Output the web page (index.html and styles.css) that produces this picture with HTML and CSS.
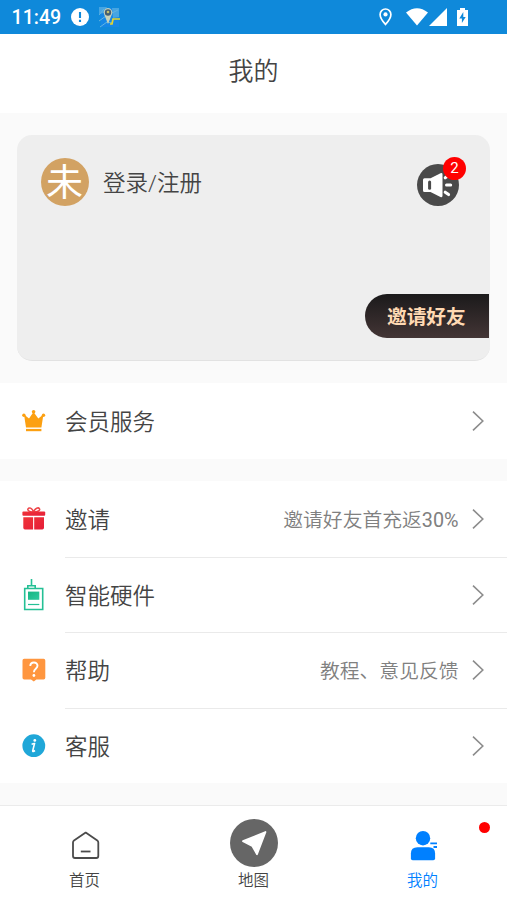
FILE: index.html
```html
<!DOCTYPE html>
<html lang="zh-CN">
<head>
<meta charset="utf-8">
<meta name="viewport" content="width=device-width, initial-scale=1">
<title>我的</title>
<link rel="stylesheet" href="styles.css">
</head>
<body>
<div class="app">
  <div class="status">
    <span class="time">11:49</span>
    <svg class="alert" width="18" height="18" viewBox="0 0 18 18"><circle cx="9" cy="9" r="9" fill="#fff"/><path d="M9 4v6M9 11.700v2.200" stroke="#0f89da" stroke-width="2.100"/></svg>
    <svg class="mapicon" width="21" height="21" viewBox="0 0 21 21"><path d="M1 1h19v19H2z" fill="#1687e6"/><path d="M0 0h8L5 6 0 7zM13 1h7v9l-6 1z" fill="#46a5e2"/><path d="M0 8l5-6M0 14l7-5M13 6l6-3M1 20l7-5 5 1" stroke="#62b4e0" stroke-width="1" fill="none"/><path d="M11 17h2l1-5h7" stroke="#e5d52b" stroke-width="1.700" fill="none"/><path d="M9 17L5 7a4.300 4.300 0 1 1 8 0z" fill="#c9d3ba"/><circle cx="9" cy="5.500" r="3.200" fill="#455e73"/><circle cx="9" cy="5" r="1.300" fill="#c3c06b"/></svg>
    <svg class="pin" width="13" height="18" viewBox="0 0 13 18"><path d="M6.500 1a5.400 5.400 0 0 0-5.400 5.400c0 4 5.400 10 5.400 10s5.400-6 5.400-10A5.400 5.400 0 0 0 6.500 1z" fill="none" stroke="#fff" stroke-width="1.700"/><circle cx="6.500" cy="6.400" r="2.100" fill="#fff"/></svg>
    <svg class="wifi" width="22" height="18" viewBox="0 0 22 18"><path d="M0 4.600Q11-4 22 4.600L11 17.500z" fill="#fff"/></svg>
    <svg class="signal" width="18" height="18" viewBox="0 0 18 18"><path d="M18 0v18H0z" fill="#fff"/></svg>
    <svg class="battery" width="11" height="18" viewBox="0 0 11 18"><path d="M3 0h5v2h3v16H0V2h3z" fill="#fff"/><path d="M6.300 4L2.300 10.400h2.600V15L8.700 9H6.300z" fill="#0f89da"/></svg>
  </div>
  <header class="header">我的</header>

  <main class="main">
    <section class="card">
      <div class="profile">
        <span class="avatar">未</span>
        <span class="login">登录/注册</span>
        <div class="notice">
          <svg width="42" height="42" viewBox="0 0 42 42"><circle cx="21" cy="21" r="21" fill="#4a4a4a"/><path d="M7.500 14.200h6L23.500 9.300q2-.8 2 1.200v21.200q0 2-2 1.200L13.500 28h-6q-1.500 0-1.500-1.500V15.700q0-1.500 1.500-1.500z" fill="#fff"/><path d="M12.600 18v6.200" stroke="#4a4a4a" stroke-width="3" stroke-linecap="round"/><path d="M29.500 21h4.200M28.200 28.200l3.400 2.400M28.200 13.800l3.400-2.400" stroke="#fff" stroke-width="3" stroke-linecap="round"/></svg>
          <span class="count">2</span>
        </div>
      </div>
      <div class="invite">邀请好友</div>
    </section>

    <section class="list">
      <div class="row">
        <svg class="icon" width="24" height="32" viewBox="0 0 24 32"><g fill="#fca011"><path d="M2 8.500L7 12.500 11.500 6l4.800 6.500L21.400 8.500l-2 13H4z"/><circle cx="11.600" cy="5.800" r="1.800"/><circle cx="1.900" cy="9.300" r="1.700"/><circle cx="21.500" cy="9.300" r="1.700"/><path d="M4 22.900h15.400v2.300H4z"/></g></svg>
        <div class="body"><span class="label">会员服务</span><svg class="chevron" width="12" height="20" viewBox="0 0 12 20"><path d="M1 .7L10.800 10 1 19.300"/></svg></div>
      </div>
    </section>

    <section class="list">
      <div class="row">
        <svg class="icon" width="24" height="32" viewBox="0 0 24 32"><defs><linearGradient id="red" x2="1" y2="1"><stop stop-color="#f03438"/><stop offset="1" stop-color="#e51d39"/></linearGradient></defs><path d="M11.600 9C8 9 5 7.500 6 5.800s4-1 5.600 3.200C13 4.800 16.500 4.100 17.500 5.800S15.500 9 11.600 9z" fill="none" stroke="#ee4549" stroke-width="1.500"/><rect x=".4" y="8.600" width="22.800" height="4.200" rx="1" fill="url(#red)"/><path d="M1.300 14.200h9.800v12.300H3q-1.700 0-1.700-1.700zM12.200 14.200H22v10.600q0 1.700-1.700 1.700h-8.100z" fill="url(#red)"/></svg>
        <div class="body"><span class="label">邀请</span><span class="note">邀请好友首充返<span class="latin">30%</span></span><svg class="chevron" width="12" height="20" viewBox="0 0 12 20"><path d="M1 .7L10.800 10 1 19.300"/></svg></div>
      </div>
      <div class="row">
        <svg class="icon" width="24" height="32" viewBox="0 0 24 32"><defs><linearGradient id="green" x2="1" y2="1"><stop stop-color="#17b583"/><stop offset="1" stop-color="#30ca9e"/></linearGradient></defs><path d="M9.500 0v6.500M5.800 9.200V6.800h7.400v2.400M2.700 9.500h18v21h-18z" fill="none" stroke="#24c095" stroke-width="1.600"/><path d="M6 12.600h11.300v8.200H6z" fill="url(#green)"/><path d="M6 25.500h11.300" stroke="#24c095" stroke-width="1.200"/></svg>
        <div class="body"><span class="label">智能硬件</span><svg class="chevron" width="12" height="20" viewBox="0 0 12 20"><path d="M1 .7L10.800 10 1 19.300"/></svg></div>
      </div>
      <div class="row">
        <svg class="icon" width="24" height="32" viewBox="0 0 24 32"><path d="M2.200 4.700h19.400q1.700 0 1.700 1.700v17.300q0 1.700-1.700 1.700h-7.200l-2.600 2.200-2.800-2.200H2.200q-1.700 0-1.700-1.700V6.400q0-1.700 1.700-1.700z" fill="#ff963f"/><path d="M8.300 12c0-4.500 7.200-4.600 7.200-.2 0 3-3.600 3-3.600 6.400" fill="none" stroke="#fff" stroke-width="1.900"/><circle cx="11.900" cy="21.500" r="1.400" fill="#fff"/></svg>
        <div class="body"><span class="label">帮助</span><span class="note">教程、意见反馈</span><svg class="chevron" width="12" height="20" viewBox="0 0 12 20"><path d="M1 .7L10.800 10 1 19.300"/></svg></div>
      </div>
      <div class="row">
        <svg class="icon" width="24" height="32" viewBox="0 0 24 32"><circle cx="11.800" cy="15.700" r="11.400" fill="#20a7d8"/><circle cx="12.800" cy="10.400" r="1.400" fill="#fff"/><path d="M9.600 14.400q2-1 2.900-.8l-1.800 7.300q-.1 1.200 2.300-.4" fill="none" stroke="#fff" stroke-width="1.600"/></svg>
        <div class="body"><span class="label">客服</span><svg class="chevron" width="12" height="20" viewBox="0 0 12 20"><path d="M1 .7L10.800 10 1 19.300"/></svg></div>
      </div>
    </section>
  </main>

  <nav class="nav">
    <div class="tab">
      <svg width="48" height="48" viewBox="0 0 48 48"><path d="M13 21.500q-1 .7-1 2V37q0 2 2 2h21.300q2 0 2-2V23.500q0-1.300-1-2L24.700 13.600z" fill="none" stroke="#4b4b4b" stroke-width="1.800" stroke-linejoin="round"/><path d="M19.800 32.500h9.700" stroke="#4b4b4b" stroke-width="1.800"/></svg>
      <span>首页</span>
    </div>
    <div class="tab">
      <svg width="48" height="48" viewBox="0 0 48 48"><circle cx="24" cy="24" r="24" fill="#666"/><path d="M13 22.200L35.500 13 27 35.200l-4.800-8.300z" fill="#fff" stroke="#fff" stroke-width="1.800" stroke-linejoin="round"/></svg>
      <span>地图</span>
    </div>
    <div class="tab active">
      <svg width="48" height="48" viewBox="0 0 48 48"><circle cx="24" cy="19.200" r="7.200" fill="#0080ff"/><path d="M18.500 28.200h11.300q6.300 0 6.300 6.300v5q0 1.800-1.800 1.800H13.700q-1.800 0-1.800-1.800v-5q0-6.300 6.600-6.300z" fill="#0080ff"/><path d="M31.300 24.300H38M34.500 28H38" stroke="#0080ff" stroke-width="1.800"/></svg>
      <span>我的</span>
      <i class="dot"></i>
    </div>
  </nav>
</div>
</body>
</html>
```
FILE: styles.css
```css
* { box-sizing: border-box; }
body {
  margin: 0;
  background: #fafafa;
  color: #444;
  font-family: Roboto, "Noto Sans CJK SC", sans-serif;
  font-weight: 350;
}
svg { display: block; flex: none; }
.app { display: flex; flex-direction: column; height: 901px; overflow: hidden; }

.status {
  display: flex;
  align-items: center;
  height: 34px;
  padding: 0 39px 0 11.5px;
  background: #0f89da;
}
.time { width: 50px; padding-top: 1px; color: #fff; font-size: 19.6px; font-weight: 500; line-height: 34px; white-space: nowrap; }
.alert { margin-left: 9px; }
.mapicon { margin-left: 10px; }
.pin { margin-left: auto; }
.wifi { margin-left: 14px; }
.signal { margin-left: 1px; }
.battery { margin-left: 10px; }

.header {
  height: 79px;
  background: #fff;
  font-size: 25px;
  line-height: 75px;
  text-align: center;
}

.main { display: flex; flex-direction: column; flex: 1; gap: 22px; padding-top: 22px; }
.card {
  display: flex;
  flex-direction: column;
  justify-content: space-between;
  height: 226px;
  margin: 0 17px;
  padding: 22.5px 0 22px 23.5px;
  border-radius: 15px;
  background: #eee;
  border-bottom: 1px solid #e2e2e2;
}
.profile { display: flex; align-items: center; height: 48px; padding-right: 31px; }
.avatar {
  width: 48px;
  height: 48px;
  border-radius: 50%;
  background: #d2a263;
  color: #fff;
  font-size: 37px;
  font-weight: 400;
  line-height: 51px;
  text-align: center;
}
.login { margin: 0 0 2px 14.5px; font-size: 22.5px; }
.notice { position: relative; margin: 7px 0 0 auto; }
.count {
  position: absolute;
  top: -7px;
  right: -7px;
  width: 23px;
  height: 23px;
  border-radius: 50%;
  background: #f00;
  color: #fff;
  font-size: 15px;
  font-weight: 400;
  line-height: 22px;
  text-align: center;
}
.invite {
  align-self: flex-end;
  width: 124px;
  height: 44px;
  margin-right: 1px;
  padding-left: 22px;
  border-radius: 22px 0 0 22px;
  background: linear-gradient(#1b1a1b, #433535);
  color: #ffd9b3;
  font-size: 19.7px;
  font-weight: 700;
  line-height: 48px;
}

.list { background: #fff; }
.row { display: flex; align-items: center; height: 75.6px; padding-left: 22px; }
.list .row:only-child { height: 76px; }
.icon { margin: 1px 19px 0 0; }
.body { display: flex; flex: 1; align-items: center; height: 100%; padding: 0 23px 0 0; }
.row + .row .body { border-top: 1px solid #eaeaea; }
.label { margin-bottom: 2px; font-size: 22.5px; }
.note { margin: 0 0 1px auto; color: #808080; font-size: 19.8px; }
.latin { font-weight: 400; }
.chevron { margin-left: 13.5px; fill: none; stroke: #8c8c8c; stroke-width: 1.6; }
.label + .chevron { margin-left: auto; }

.nav { display: flex; height: 96px; border-top: 1px solid #ebebeb; background: #fff; }
.tab {
  position: relative;
  display: flex;
  flex: 1;
  flex-direction: column;
  align-items: center;
  padding-top: 13px;
  font-size: 15.5px;
  line-height: 28px;
}
.active { color: #0080ff; }
.dot { position: absolute; top: 16px; right: 17px; width: 11px; height: 11px; border-radius: 50%; background: #f00; }
```
